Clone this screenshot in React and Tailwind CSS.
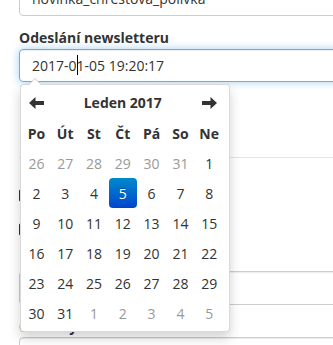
import React from 'react';

const weekdays = ['Po', 'Út', 'St', 'Čt', 'Pá', 'So', 'Ne'];

const weeks = [
  [26, 27, 28, 29, 30, 31, 1],
  [2, 3, 4, 5, 6, 7, 8],
  [9, 10, 11, 12, 13, 14, 15],
  [16, 17, 18, 19, 20, 21, 22],
  [23, 24, 25, 26, 27, 28, 29],
  [30, 31, 1, 2, 3, 4, 5],
];

const Arrow = ({ dir }) => (
  <svg
    width="15"
    height="12"
    viewBox="0 0 15 12"
    className={dir === 'right' ? 'rotate-180' : ''}
  >
    <path d="M0 6 L6.5 0 L6.5 4 L15 4 L15 8 L6.5 8 L6.5 12 Z" fill="#333" />
  </svg>
);

const DatePicker = () => {
  const isOther = (row, day) => (row === 0 && day > 20) || (row === 5 && day < 10);

  return (
    <div className="absolute left-px top-[calc(100%+2px)] z-10 w-[210px] h-[248px] bg-white border border-[rgba(0,0,0,0.15)] rounded-[4px] shadow-[0_6px_12px_rgba(0,0,0,0.175)] pl-px pt-[2px] pb-[3px]">
      {/* caret */}
      <div className="absolute -top-[7px] left-[7px] w-0 h-0 border-x-[7px] border-x-transparent border-b-[7px] border-b-[#ccc]"></div>
      <div className="absolute -top-[6px] left-[8px] w-0 h-0 border-x-[6px] border-x-transparent border-b-[6px] border-b-white"></div>

      <div className="grid grid-cols-[repeat(7,28.8px)]">
        <div className="h-[31px] flex items-center justify-center">
          <Arrow dir="left" />
        </div>
        <div className="col-span-5 h-[31px] flex items-center justify-center font-bold">
          Leden 2017
        </div>
        <div className="h-[31px] flex items-center justify-center">
          <Arrow dir="right" />
        </div>

        {weekdays.map((d) => (
          <div key={d} className="h-[30px] flex items-center justify-center font-bold">
            {d}
          </div>
        ))}

        {weeks.map((week, r) =>
          week.map((day, c) => {
            const active = r === 1 && day === 5;
            return (
              <div key={`${r}-${c}`} className="h-[30px] flex items-center justify-center">
                {active ? (
                  <span className="w-[28px] h-[30px] flex items-center justify-center rounded-[4px] bg-gradient-to-b from-[#0088cc] to-[#0044cc] text-white [text-shadow:0_-1px_0_rgba(0,0,0,0.25)]">
                    {day}
                  </span>
                ) : (
                  <span className={isOther(r, day) ? 'text-[#999]' : ''}>{day}</span>
                )}
              </div>
            );
          })
        )}
      </div>
    </div>
  );
};

export default function App() {
  const inputBase =
    'h-[34px] border border-[#ccc] rounded-[4px] px-[12px] py-[6px] leading-[20px] shadow-[inset_0_1px_1px_rgba(0,0,0,0.075)]';

  return (
    <div className="relative w-[333px] h-[345px] overflow-hidden bg-white font-['Open_Sans',sans-serif] text-[14px] text-[#333]">
      <div className="w-[420px] pl-[19px] -mt-[18px]">
        <div className={inputBase}>novinka_chrestova_polivka</div>

        <label className="block mt-[12px] leading-[20px] font-bold">Odeslání newsletteru</label>

        <div className="relative mt-px">
          <div className="h-[33px] border border-[#66afe9] rounded-[4px] px-[12px] py-[6px] leading-[20px] shadow-[inset_0_1px_1px_rgba(0,0,0,0.075),0_0_8px_rgba(102,175,233,0.6)]">
            2017-0
            <span className="inline-block align-top w-px h-[20px] -mr-px bg-black -mt-px"></span>
            1-05 19:20:17
          </div>
          <DatePicker />
        </div>

        <div className="h-[75px]"></div>
        <div className="border-t border-[#e5e5e5]"></div>

        {/* checkboxes hidden behind the picker */}
        <div className="mt-[31px] w-[13px] h-[13px] border border-[#333] rounded-[2px]"></div>
        <div className="mt-[21px] w-[13px] h-[13px] border border-[#333] rounded-[2px]"></div>

        <div className="mt-[14px] h-[20px]"></div>
        <div className={`${inputBase} mt-px`}></div>

        <label className="block mt-[12px] leading-[20px] font-bold">Obrázky</label>
        <div className={inputBase}></div>
      </div>
    </div>
  );
}
